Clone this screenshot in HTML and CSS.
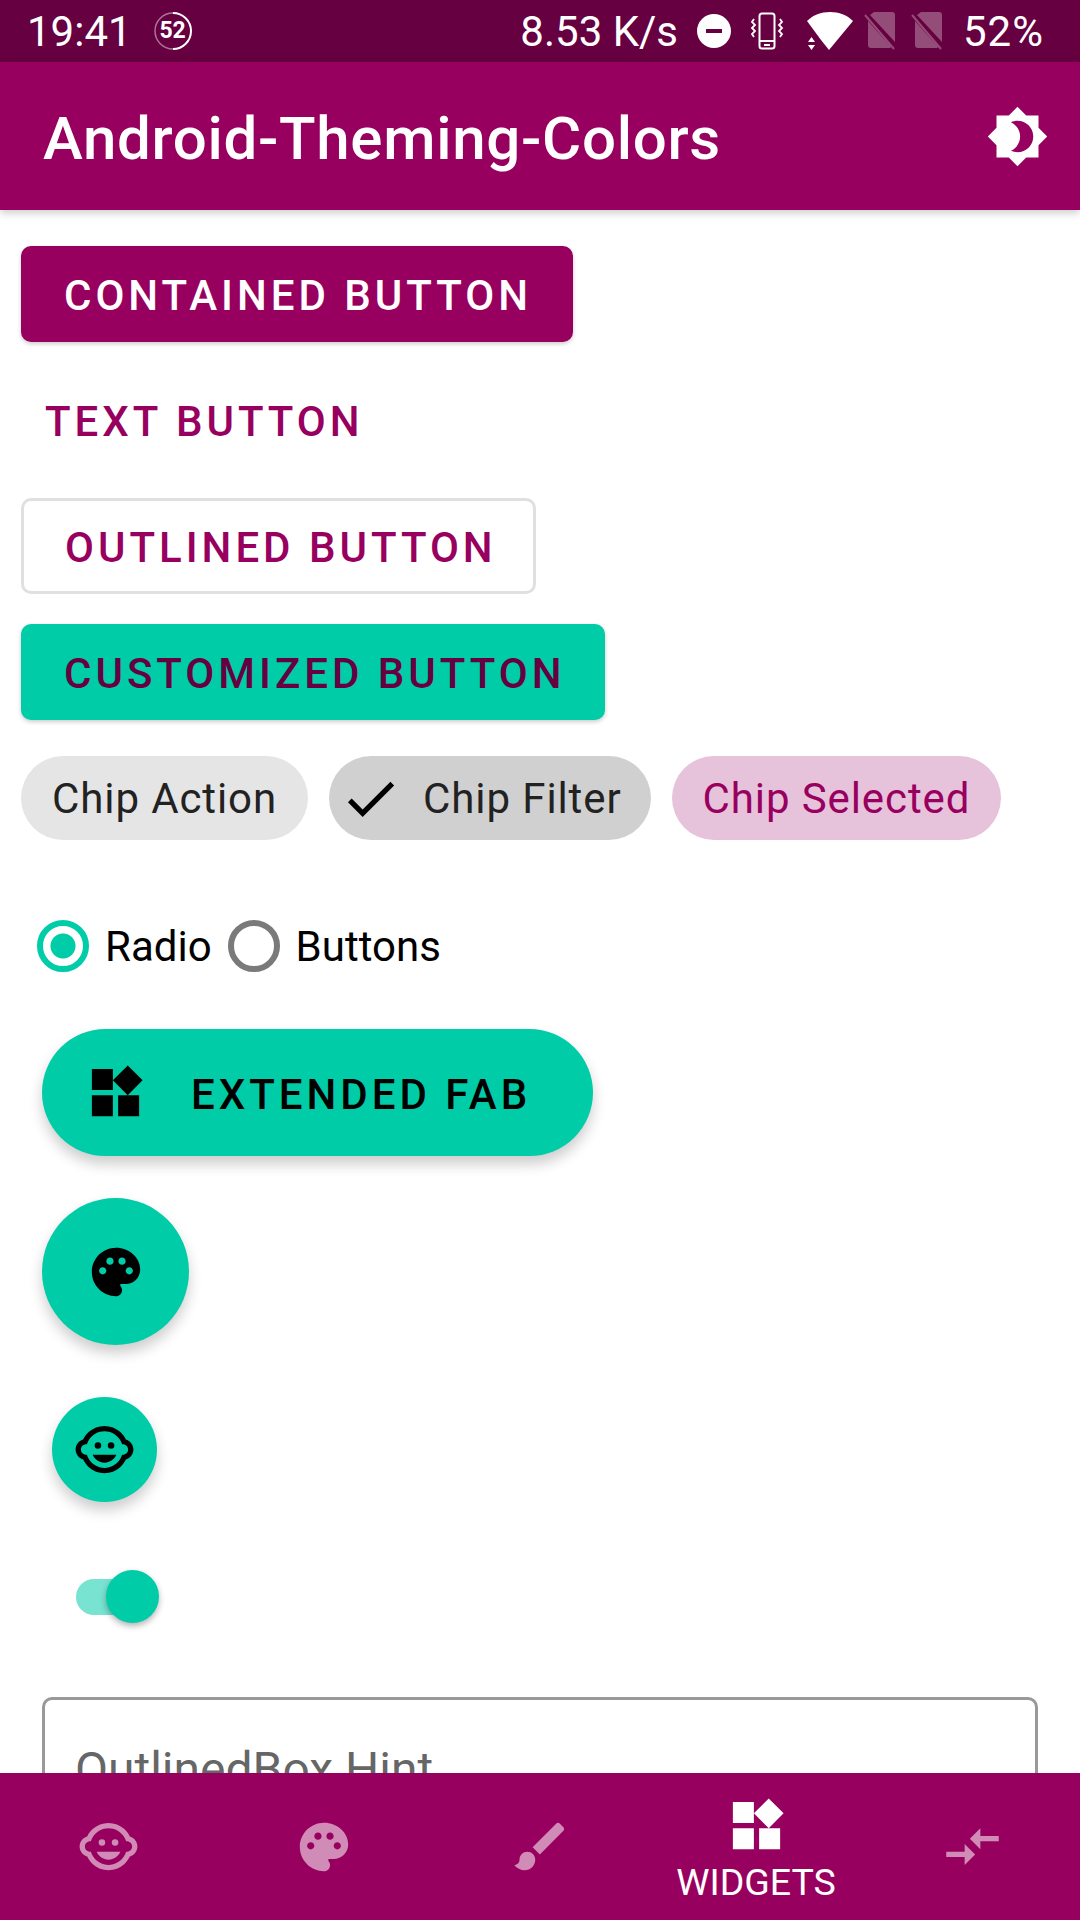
FILE: index.html
```html
<!DOCTYPE html>
<html lang="en">
<head>
  <meta charset="UTF-8" />
  <meta name="viewport" content="width=device-width, initial-scale=1.0"/>
  <title>Android-Theming-Colors</title>
  <link rel="stylesheet" href="styles.css">
</head>
<body>
  <div class="status-bar">
    <div class="status-left">
      <span>19:41</span>
      <span class="gauge">
        <svg viewBox="0 0 38 38" width="38" height="38">
          <path d="M19 1a18 18 0 0 0 0 36" fill="none" stroke="#fff" stroke-opacity="0.45" stroke-width="1.5"/>
          <path d="M19 1a18 18 0 0 1 0 36" fill="none" stroke="#fff" stroke-width="2"/>
        </svg>
        <span class="gauge-num">52</span>
      </span>
    </div>
    <div class="status-right">
      <span>8.53 K/s</span>
      <svg class="st-dnd" viewBox="0 0 34 34" width="34" height="34">
        <path fill="#fff" fill-rule="evenodd" d="M17 0a17 17 0 1 0 0 34a17 17 0 1 0 0-34zM9 15h16v4H9z"/>
      </svg>
      <svg class="st-vib" viewBox="0 0 34 38" width="34" height="38" fill="none" stroke="#fff">
        <rect x="9.500" y="1.500" width="15" height="35" rx="2.500" stroke-width="2"/>
        <path d="M10 29h14" stroke-width="2"/>
        <path d="M14 33h6" stroke-width="2"/>
        <path d="M4 7l-2 3 3 3-3 3 3 3-3 3 2 3" stroke-width="1.800"/>
        <path d="M30 7l2 3-3 3 3 3-3 3 3 3-2 3" stroke-width="1.800"/>
      </svg>
      <svg class="st-wifi" viewBox="0 0 47 38" width="47" height="38">
        <path fill="#fff" d="M23 38L47 9C41 3 33 0 24 0S7 3 1 9l14 19z"/>
        <path fill="#fff" d="M2 30l3.500-5 3.500 5zM2 33h7l-3.500 5z"/>
      </svg>
      <svg class="st-sim" viewBox="0 0 32 38" width="32" height="38">
        <path fill="#fff" fill-opacity="0.3" d="M10 0h18a3 3 0 0 1 3 3v27L6 3zM4 9l23 26a3 3 0 0 1-1 1H7a3 3 0 0 1-3-3z"/>
        <path d="M1 3l29 34" stroke="#fff" stroke-opacity="0.3" stroke-width="2"/>
      </svg>
      <svg class="st-sim" viewBox="0 0 32 38" width="32" height="38">
        <path fill="#fff" fill-opacity="0.3" d="M10 0h18a3 3 0 0 1 3 3v27L6 3zM4 9l23 26a3 3 0 0 1-1 1H7a3 3 0 0 1-3-3z"/>
        <path d="M1 3l29 34" stroke="#fff" stroke-opacity="0.3" stroke-width="2"/>
      </svg>
      <span class="st-battery">52%</span>
    </div>
  </div>

  <header class="app-bar">
    <h1>Android-Theming-Colors</h1>
    <svg class="icon" viewBox="0 0 24 24" fill="#fff">
      <path d="M20 8.690V4h-4.690L12 .69 8.690 4H4v4.690L.69 12 4 15.310V20h4.690L12 23.310 15.310 20H20v-4.690L23.310 12 20 8.690zM12 18c-.89 0-1.740-.2-2.500-.55C11.560 16.500 13 14.420 13 12s-1.440-4.500-3.500-5.450C10.260 6.200 11.110 6 12 6c3.310 0 6 2.690 6 6s-2.690 6-6 6z"/>
    </svg>
  </header>

  <main class="content">
    <button class="btn btn-contained">CONTAINED BUTTON</button>
    <button class="btn btn-text">TEXT BUTTON</button>
    <button class="btn btn-outlined">OUTLINED BUTTON</button>
    <button class="btn btn-custom">CUSTOMIZED BUTTON</button>

    <div class="chips">
      <span class="chip">Chip Action</span>
      <span class="chip chip-filter">
        <svg viewBox="0 0 24 24" width="63" height="63"><path d="M9 16.170L4.830 12l-1.420 1.410L9 19 21 7l-1.410-1.410z"/></svg>
        Chip Filter
      </span>
      <span class="chip chip-selected">Chip Selected</span>
    </div>

    <div class="radios">
      <span class="radio radio-on"></span>
      <span class="radio-label">Radio</span>
      <span class="radio"></span>
      <span class="radio-label">Buttons</span>
    </div>

    <button class="fab fab-extended">
      <svg class="icon" viewBox="0 0 24 24"><path d="M13 13v8h8v-8h-8zM3 21h8v-8H3v8zM3 3v8h8V3H3zm13.660-1.310L11 7.340 16.660 13l5.660-5.660-5.660-5.650z"/></svg>
      <span class="fab-label">EXTENDED FAB</span>
    </button>

    <button class="fab fab-round">
      <svg class="icon-palette" viewBox="0 0 24 24"><path d="M12 2C6.490 2 2 6.490 2 12s4.490 10 10 10c1.380 0 2.500-1.120 2.500-2.500 0-.61-.23-1.200-.64-1.670-.08-.1-.13-.21-.13-.33 0-.28.22-.5.5-.5H16c3.310 0 6-2.690 6-6 0-4.960-4.490-9-10-9zm-5.500 11c-.83 0-1.500-.67-1.500-1.500S5.670 10 6.500 10s1.500.67 1.500 1.500S7.330 13 6.500 13zm3-4C8.670 9 8 8.330 8 7.500S8.670 6 9.500 6s1.500.67 1.500 1.500S10.330 9 9.500 9zm5 0c-.83 0-1.500-.67-1.500-1.500S13.670 6 14.500 6s1.500.67 1.500 1.500S15.330 9 14.500 9zm3 4c-.83 0-1.500-.67-1.500-1.500s.67-1.500 1.500-1.500 1.500.67 1.500 1.500-.67 1.500-1.500 1.500z"/></svg>
    </button>

    <button class="fab fab-small">
      <svg class="icon" viewBox="0 0 24 24"><circle cx="14.500" cy="10.500" r="1.250"/><circle cx="9.500" cy="10.500" r="1.250"/><path d="M22.940 12.660c.04-.21.06-.43.06-.66s-.02-.45-.06-.66c-.25-1.510-1.360-2.740-2.810-3.170-.53-1.120-1.280-2.100-2.190-2.910C16.360 3.850 14.280 3 12 3s-4.360.85-5.940 2.260c-.92.81-1.670 1.800-2.190 2.910-1.450.43-2.560 1.650-2.810 3.170-.04.21-.06.43-.06.66s.02.45.06.66c.25 1.510 1.360 2.740 2.810 3.170.52 1.110 1.270 2.090 2.170 2.890C7.620 20.140 9.710 21 12 21s4.380-.86 5.970-2.280c.9-.8 1.650-1.790 2.170-2.890 1.440-.43 2.550-1.650 2.800-3.170zM19 14c-.1 0-.19-.02-.29-.03-.2.670-.49 1.290-.86 1.860C16.600 17.740 14.450 19 12 19s-4.600-1.260-5.850-3.170c-.37-.57-.66-1.190-.86-1.860-.1.01-.19.03-.29.03-1.100 0-2-.9-2-2s.9-2 2-2c.1 0 .19.02.29.03.2-.67.49-1.290.86-1.860C7.400 6.260 9.550 5 12 5s4.600 1.260 5.850 3.170c.37.57.66 1.190.86 1.860.1-.01.19-.03.29-.03 1.100 0 2 .9 2 2s-.9 2-2 2zM7.500 14c.76 1.770 2.490 3 4.500 3s3.740-1.230 4.500-3h-9z"/></svg>
    </button>

    <div class="switch">
      <span class="switch-track"></span>
      <span class="switch-thumb"></span>
    </div>

    <div class="outlined-box">OutlinedBox Hint</div>
  </main>

  <nav class="bottom-nav">
    <div class="nav-item">
      <svg class="icon" viewBox="0 0 24 24"><circle cx="14.500" cy="10.500" r="1.250"/><circle cx="9.500" cy="10.500" r="1.250"/><path d="M22.940 12.660c.04-.21.06-.43.06-.66s-.02-.45-.06-.66c-.25-1.510-1.360-2.740-2.810-3.170-.53-1.120-1.280-2.100-2.190-2.910C16.360 3.850 14.280 3 12 3s-4.360.85-5.940 2.260c-.92.81-1.670 1.800-2.190 2.910-1.450.43-2.560 1.650-2.810 3.170-.04.21-.06.43-.06.66s.02.45.06.66c.25 1.510 1.360 2.740 2.810 3.170.52 1.110 1.270 2.090 2.170 2.890C7.620 20.140 9.710 21 12 21s4.380-.86 5.970-2.280c.9-.8 1.650-1.790 2.170-2.890 1.440-.43 2.550-1.650 2.800-3.170zM19 14c-.1 0-.19-.02-.29-.03-.2.670-.49 1.290-.86 1.860C16.600 17.740 14.450 19 12 19s-4.600-1.260-5.850-3.170c-.37-.57-.66-1.190-.86-1.860-.1.01-.19.03-.29.03-1.100 0-2-.9-2-2s.9-2 2-2c.1 0 .19.02.29.03.2-.67.49-1.290.86-1.860C7.400 6.260 9.550 5 12 5s4.600 1.260 5.850 3.170c.37.57.66 1.190.86 1.860.1-.01.19-.03.29-.03 1.100 0 2 .9 2 2s-.9 2-2 2zM7.500 14c.76 1.770 2.490 3 4.500 3s3.740-1.230 4.500-3h-9z"/></svg>
    </div>
    <div class="nav-item">
      <svg class="icon-palette" viewBox="0 0 24 24"><path d="M12 2C6.490 2 2 6.490 2 12s4.490 10 10 10c1.380 0 2.500-1.120 2.500-2.500 0-.61-.23-1.200-.64-1.670-.08-.1-.13-.21-.13-.33 0-.28.22-.5.5-.5H16c3.310 0 6-2.690 6-6 0-4.960-4.490-9-10-9zm-5.500 11c-.83 0-1.500-.67-1.500-1.500S5.670 10 6.500 10s1.500.67 1.500 1.500S7.330 13 6.500 13zm3-4C8.670 9 8 8.330 8 7.500S8.670 6 9.500 6s1.500.67 1.500 1.500S10.330 9 9.500 9zm5 0c-.83 0-1.500-.67-1.500-1.500S13.670 6 14.500 6s1.500.67 1.500 1.500S15.330 9 14.500 9zm3 4c-.83 0-1.500-.67-1.500-1.500s.67-1.500 1.500-1.500 1.500.67 1.500 1.500-.67 1.500-1.500 1.500z"/></svg>
    </div>
    <div class="nav-item">
      <svg class="icon" viewBox="0 0 24 24"><path d="M7 14c-1.660 0-3 1.340-3 3 0 1.310-1.160 2-2 2 .92 1.220 2.490 2 4 2 2.210 0 4-1.790 4-4 0-1.660-1.340-3-3-3zm13.710-9.370l-1.340-1.340c-.39-.39-1.020-.39-1.410 0L9 12.250 11.750 15l8.960-8.960c.39-.39.39-1.020 0-1.410z"/></svg>
    </div>
    <div class="nav-item nav-active">
      <svg class="icon" viewBox="0 0 24 24"><path d="M13 13v8h8v-8h-8zM3 21h8v-8H3v8zM3 3v8h8V3H3zm13.660-1.310L11 7.340 16.660 13l5.660-5.660-5.660-5.650z"/></svg>
      <span class="nav-label">WIDGETS</span>
    </div>
    <div class="nav-item">
      <svg class="icon" viewBox="0 0 24 24"><path d="M9.010 14H2v2h7.010v3L13 15l-3.990-4v3zm5.980-1v-3H22V8h-7.010V5L11 9l3.990 4z"/></svg>
    </div>
  </nav>
</body>
</html>
```

FILE: styles.css
```css
* {
  box-sizing: border-box;
}
body {
  margin: 0;
  width: 1080px;
  height: 1920px;
  display: flex;
  flex-direction: column;
  overflow: hidden;
  background: #fff;
  font-family: Roboto, "Liberation Sans", sans-serif;
}
.icon {
  width: 63px;
  height: 63px;
  flex: none;
}
.icon-palette {
  width: 58px;
  height: 58px;
  flex: none;
}

/* status bar */
.status-bar {
  height: 62px;
  flex: none;
  display: flex;
  justify-content: space-between;
  align-items: center;
  padding: 0 36px 0 27px;
  background: #660040;
  color: #fff;
  font-size: 42px;
}
.status-left, .status-right {
  display: flex;
  align-items: center;
}
.gauge {
  position: relative;
  width: 38px;
  height: 38px;
  margin-left: 22px;
}
.gauge svg {
  display: block;
}
.gauge-num {
  position: absolute;
  inset: 0;
  text-align: center;
  line-height: 38px;
  font-size: 23px;
  font-weight: 700;
}
.st-dnd { margin-left: 19px; }
.st-vib { margin-left: 19px; }
.st-wifi {
  margin-left: 22px;
  margin-right: -4px;
}
.st-sim { margin-left: 15px; }
.st-battery {
  margin-left: 20px;
  letter-spacing: 1px;
}

/* app bar */
.app-bar {
  height: 148px;
  flex: none;
  display: flex;
  justify-content: space-between;
  align-items: center;
  padding: 0 31px 0 43px;
  background: #98005f;
  box-shadow: 0 3px 8px rgba(0,0,0,0.2);
  position: relative;
  color: #fff;
}
.app-bar h1 {
  margin: 0;
  padding-top: 5px;
  font-size: 60px;
  font-weight: 500;
  letter-spacing: 0.7px;
}

/* main column */
.content {
  flex: 1;
  min-height: 0;
  overflow: hidden;
  display: flex;
  flex-direction: column;
  align-items: flex-start;
  padding: 36px 0 0 21px;
}
.content > * {
  flex: none;
}

/* buttons */
.btn {
  height: 96px;
  padding: 2px 41px 0 43px;
  margin-bottom: 30px;
  border: none;
  border-radius: 10px;
  background: none;
  font-family: inherit;
  font-size: 42px;
  font-weight: 500;
  letter-spacing: 4px;
  white-space: nowrap;
}
.btn-contained {
  background: #98005f;
  color: #fff;
  box-shadow: 0 2px 4px rgba(0,0,0,0.2);
}
.btn-text {
  padding: 2px 24px 0;
  color: #98005f;
}
.btn-outlined {
  padding: 2px 36px 0 41px;
  border: 3px solid #e0e0e0;
  color: #98005f;
}
.btn-custom {
  padding-right: 39px;
  background: #00cca8;
  color: #660040;
  box-shadow: 0 2px 4px rgba(0,0,0,0.2);
}

/* chips */
.chips {
  display: flex;
  gap: 21px;
  margin-top: 6px;
}
.chip {
  height: 84px;
  padding: 0 31px;
  display: flex;
  align-items: center;
  border-radius: 42px;
  background: #e5e5e5;
  color: #222;
  font-size: 42px;
  letter-spacing: 0.9px;
  white-space: nowrap;
}
.chip-filter {
  padding: 0 29px 0 10px;
  gap: 21px;
  background: #d0d0d0;
}
.chip-selected {
  background: #e6c2db;
  color: #98005f;
}

/* radios */
.radios {
  display: flex;
  align-items: center;
  margin: 80px 0 0 16px;
  color: #000;
  font-size: 42px;
}
.radio {
  width: 52px;
  height: 52px;
  border: 6px solid #7a7a7a;
  border-radius: 50%;
}
.radio-on {
  border-color: #00cca8;
  background: radial-gradient(circle, #00cca8 12px, #fff 13px);
}
.radio-label {
  margin: 0 16px;
}

/* fabs */
.fab {
  display: flex;
  align-items: center;
  justify-content: center;
  padding: 0;
  border: none;
  background: #00cca8;
  color: #000;
  font-family: inherit;
  box-shadow: 0 8px 14px rgba(0,0,0,0.2);
}
.fab-extended {
  width: 551px;
  height: 127px;
  margin: 57px 0 0 21px;
  border-radius: 64px;
  justify-content: flex-start;
  padding-left: 42px;
  gap: 44px;
  font-size: 42px;
  font-weight: 500;
  letter-spacing: 4px;
}
.fab-label {
  padding-top: 4px;
}
.fab-round {
  width: 147px;
  height: 147px;
  margin: 42px 0 0 21px;
  border-radius: 50%;
}
.fab-small {
  width: 105px;
  height: 105px;
  margin: 52px 0 0 31px;
  border-radius: 50%;
}

/* switch */
.switch {
  position: relative;
  width: 83px;
  height: 53px;
  margin: 68px 0 0 55px;
}
.switch-track {
  position: absolute;
  left: 0;
  top: 9px;
  width: 72px;
  height: 36px;
  border-radius: 18px;
  background: #78e3d1;
}
.switch-thumb {
  position: absolute;
  right: 0;
  top: 0;
  width: 53px;
  height: 53px;
  border-radius: 50%;
  background: #00cca8;
  box-shadow: 0 3px 6px rgba(0,0,0,0.3);
}

/* text field */
.outlined-box {
  width: 996px;
  height: 170px;
  margin: 74px 0 0 21px;
  padding: 41px 30px 0;
  border: 3px solid #999;
  border-radius: 10px;
  color: #666;
  font-size: 48px;
}

/* bottom nav */
.bottom-nav {
  height: 147px;
  flex: none;
  display: grid;
  grid-template-columns: repeat(5, 1fr);
  background: #98005f;
  fill: #fff;
  fill-opacity: 0.55;
  position: relative;
}
.nav-item {
  display: flex;
  flex-direction: column;
  align-items: center;
  justify-content: center;
}
.nav-active {
  padding-top: 3px;
  fill-opacity: 1;
  color: #fff;
}
.nav-label {
  margin-top: 5px;
  font-size: 37.5px;
  line-height: 40px;
}
```
